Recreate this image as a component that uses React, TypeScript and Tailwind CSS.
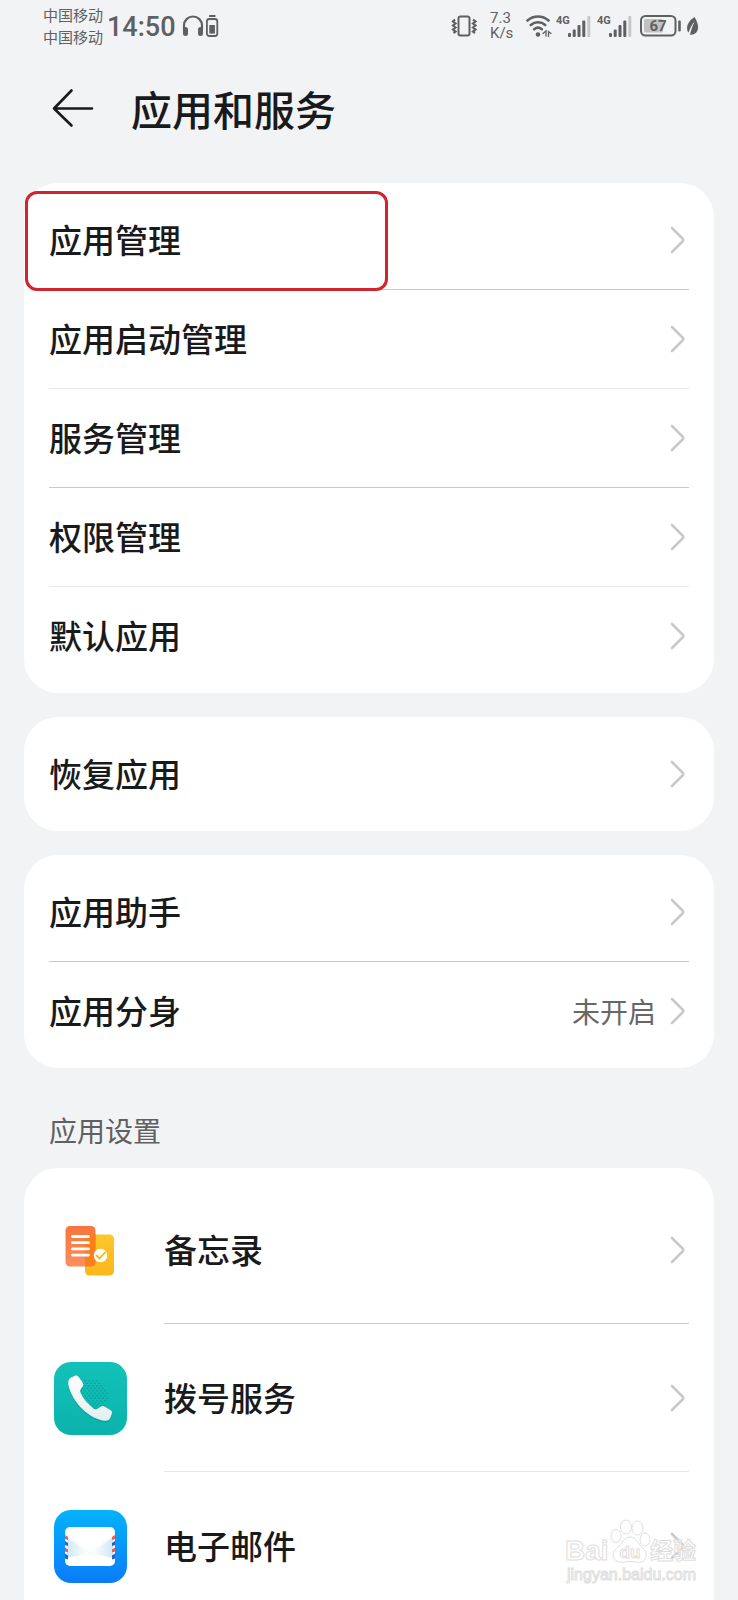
import type { ReactNode } from 'react'

interface Item {
  label: string
  value?: string
  marked?: boolean
}

interface AppItem {
  label: string
  icon: ReactNode
}

const GROUPS: Item[][] = [
  [
    { label: '应用管理', marked: true },
    { label: '应用启动管理' },
    { label: '服务管理' },
    { label: '权限管理' },
    { label: '默认应用' },
  ],
  [{ label: '恢复应用' }],
  [{ label: '应用助手' }, { label: '应用分身', value: '未开启' }],
]

const APPS: AppItem[] = [
  { label: '备忘录', icon: <MemoIcon /> },
  { label: '拨号服务', icon: <PhoneIcon /> },
  { label: '电子邮件', icon: <MailIcon /> },
]

function Chevron() {
  return (
    <svg width="16" height="28" viewBox="0 0 16 28" fill="none" className="mr-[3px] shrink-0">
      <path d="M2 2l10.500 10.500q1.500 1.500 0 3L2 26" stroke="#c9c9c9" strokeWidth="2.600" strokeLinecap="round" />
    </svg>
  )
}

function MemoIcon() {
  return (
    <svg width="73" height="73" viewBox="0 0 73 73">
      <defs>
        <linearGradient id="memoFront" x1="0" y1="0" x2="0" y2="1">
          <stop offset="0" stopColor="#f9743a" />
          <stop offset="1" stopColor="#fd8f5c" />
        </linearGradient>
        <linearGradient id="memoBack" x1="0" y1="0" x2="0" y2="1">
          <stop offset="0" stopColor="#fcc62e" />
          <stop offset="1" stopColor="#fbb71a" />
        </linearGradient>
      </defs>
      <rect x="31" y="20.500" width="29" height="41" rx="4.500" fill="url(#memoBack)" />
      <rect x="11.500" y="12" width="30" height="40.500" rx="4.500" fill="url(#memoFront)" />
      <path d="M31 52.500V25q0-4.500 4.500-4.500h6V48q0 4.500-4.500 4.500z" fill="#fa7c14" opacity="0.850" />
      <circle cx="46.500" cy="41.500" r="6.800" fill="#fff" />
      <path d="M42.500 41.500l3 3 5.500-6" fill="none" stroke="#f9b321" strokeWidth="1.800" strokeLinecap="round" />
      <path d="M18.500 22.500h16M18.500 28.700h16M18.500 34.900h16M18.500 41.100h16" stroke="#fff" strokeWidth="2.800" strokeLinecap="round" />
    </svg>
  )
}

function PhoneIcon() {
  return (
    <svg width="73" height="73" viewBox="0 0 73 73">
      <defs>
        <linearGradient id="phoneBg" x1="0" y1="0" x2="0" y2="1">
          <stop offset="0" stopColor="#12c2b9" />
          <stop offset="1" stopColor="#0bb3ac" />
        </linearGradient>
        <linearGradient id="handset" x1="0" y1="0" x2="0" y2="1">
          <stop offset="0" stopColor="#fff" />
          <stop offset="1" stopColor="#e3eeee" />
        </linearGradient>
        <pattern id="dots" width="4" height="5" patternUnits="userSpaceOnUse">
          <circle cx="1" cy="1.200" r="0.700" fill="#08918c" />
          <circle cx="3" cy="3.700" r="0.700" fill="#08918c" />
        </pattern>
      </defs>
      <rect width="73" height="73" rx="17" fill="url(#phoneBg)" />
      <circle cx="37" cy="34" r="17" fill="url(#dots)" />
      <path
        d="M17 15.500l4-1.700q2-.7 3.500 1l4.200 6q1.300 2 0 3.700l-1.900 2.600q-1.200 1.900-.2 4C29.500 37.500 34 42 39.500 46.500q2 1.300 4 .2l3.300-2.300q1.700-1 3.700 0l6.200 3.800q2 1.300 1.200 3.400l-1.600 4.200q-1.400 3.400-5.200 3C36 57.500 18 41 14.300 22.500q-.6-4.900 2.700-7z"
        fill="#067f7b"
        opacity="0.350"
        transform="translate(0 1.500)"
      />
      <path
        d="M17 15.500l4-1.700q2-.7 3.500 1l4.200 6q1.300 2 0 3.700l-1.900 2.600q-1.200 1.900-.2 4C29.500 37.500 34 42 39.500 46.500q2 1.300 4 .2l3.300-2.300q1.700-1 3.700 0l6.200 3.800q2 1.300 1.200 3.400l-1.600 4.200q-1.400 3.400-5.200 3C36 57.500 18 41 14.300 22.500q-.6-4.900 2.700-7z"
        fill="url(#handset)"
      />
    </svg>
  )
}

function MailIcon() {
  return (
    <svg width="73" height="73" viewBox="0 0 73 73">
      <defs>
        <linearGradient id="mailBg" x1="0" y1="0" x2="0" y2="1">
          <stop offset="0" stopColor="#04b3fb" />
          <stop offset="1" stopColor="#0a7cf7" />
        </linearGradient>
        <linearGradient id="foldLeft" x1="0" y1="0" x2="1" y2="0">
          <stop offset="0" stopColor="#cfe9f4" />
          <stop offset="1" stopColor="#fff" />
        </linearGradient>
        <linearGradient id="foldRight" x1="1" y1="0" x2="0" y2="0">
          <stop offset="0" stopColor="#cfe9f4" />
          <stop offset="1" stopColor="#fff" />
        </linearGradient>
      </defs>
      <rect width="73" height="73" rx="17" fill="url(#mailBg)" />
      <rect x="11" y="17" width="50" height="39" rx="5" fill="#fff" />
      <path d="M13 27l21 16.500L13 48z" fill="url(#foldLeft)" />
      <path d="M59 27L38 43.500 59 48z" fill="url(#foldRight)" />
      <path d="M14 27L33 41.500q3 2 6 0L58 27" fill="none" stroke="#eef5f9" strokeWidth="1" />
      <path d="M11 25l3 2v3l-3-1zM11 37.500l3 2v3l-3-1zM61 25l-3 2v3l3-1zM61 37.500l-3 2v3l3-1z" fill="#ee5a50" />
      <path d="M11 31l3 2v3l-3-1zM11 43.500l3 2v4l-3-1zM61 31l-3 2v3l3-1zM61 43.500l-3 2v4l3-1z" fill="#1f62d0" />
    </svg>
  )
}

function Signal() {
  return (
    <svg width="35" height="24" viewBox="0 0 35 24" fill="#5f6062">
      <text x="0" y="10" fontSize="11" fontWeight="700" fontFamily="Roboto, sans-serif">4G</text>
      <rect x="12" y="19" width="3" height="4" rx="1" />
      <rect x="16.700" y="15.500" width="3" height="7.500" rx="1" />
      <rect x="21.500" y="11" width="3" height="12" rx="1" />
      <rect x="26.300" y="6.500" width="3" height="16.500" rx="1" />
      <rect x="31.300" y="2" width="3" height="21" rx="1" fill="#c7c8ca" />
    </svg>
  )
}

function StatusBar() {
  return (
    <div className="flex h-[52px] items-center justify-between pr-[39px] pl-[43px] text-[#5f6062]">
      <div className="flex items-center">
        <div className="text-[15px] leading-[22px]">
          <div>中国移动</div>
          <div>中国移动</div>
        </div>
        <div className="ml-1 pt-0.5 font-[Roboto] text-[27px] leading-8 font-medium">14:50</div>
        <svg width="22" height="22" viewBox="0 0 22 22" className="ml-1.5" fill="none" stroke="#5f6062">
          <path d="M2 15v-4.500a9 9 0 0 1 18 0V15" strokeWidth="2.200" />
          <path d="M3.500 14.500v4M18.500 14.500v4" strokeWidth="5" strokeLinecap="round" />
        </svg>
        <svg width="14" height="24" viewBox="0 0 14 24" className="ml-px" fill="#5f6062">
          <rect x="4" y="1" width="6.500" height="2" rx="0.500" />
          <rect x="1.900" y="5" width="10.400" height="17" rx="2.500" fill="none" stroke="#5f6062" strokeWidth="1.800" />
          <rect x="4.300" y="11" width="5.600" height="8.600" />
        </svg>
      </div>
      <div className="flex items-center">
        <svg width="27" height="24" viewBox="0 0 27 24" fill="none" stroke="#5f6062" strokeWidth="2">
          <rect x="7.500" y="2.500" width="11" height="19" rx="2" />
          <path d="M4 5.500L2 7.500l2.500 2L2 11.500l2.500 2L2 15.500l2.500 2-2 1.500M22 5.500l2.500 2-2.500 2 2.500 2-2.500 2 2.500 2-2.500 2 2 1.500" strokeWidth="2.200" />
        </svg>
        <div className="ml-3 w-6 font-[Roboto] text-[15px] leading-[15px]">
          <div>7.3</div>
          <div>K/s</div>
        </div>
        <svg width="26" height="24" viewBox="0 0 26 24" className="ml-3" fill="none" stroke="#5f6062" strokeWidth="2.600" strokeLinecap="round">
          <path d="M1.500 6.500a16 16 0 0 1 21 0M4.800 11a11 11 0 0 1 14.400 0M8.200 15.200a6 6 0 0 1 7.600 0" />
          <circle cx="12" cy="20.500" r="2.300" fill="#5f6062" stroke="none" />
          <path d="M17 19.500l3-2.500v5M25 19.500l-2.500-2v5" strokeWidth="1.300" />
        </svg>
        <span className="ml-1 flex gap-1.5">
          <Signal />
          <Signal />
        </span>
        <svg width="42" height="24" viewBox="0 0 42 24" className="ml-2" fill="#5f6062">
          <rect x="1" y="2" width="34.500" height="19.500" rx="4.500" fill="none" stroke="#5f6062" strokeWidth="2" />
          <rect x="4" y="5" width="19" height="13.500" rx="1.500" fill="#c0c1c3" />
          <rect x="38.200" y="6.500" width="2.600" height="11" rx="1" />
          <text x="18" y="17" fontSize="15" fontWeight="700" textAnchor="middle" fontFamily="Roboto, sans-serif">67</text>
        </svg>
        <svg width="13" height="20" viewBox="0 0 13 20" className="ml-1" fill="#5f6062">
          <path d="M8.500 1Q1 6 1 12q0 3 1.500 4.500Q5.500 8.500 8.800 5.500 6 10 4 18.800q5 .5 7.500-4.300Q13.500 9 8.500 1z" />
        </svg>
      </div>
    </div>
  )
}

function Watermark() {
  return (
    <svg
      width="140"
      height="72"
      viewBox="0 0 140 72"
      className="pointer-events-none absolute right-9 bottom-4"
      fill="#fff"
      fillOpacity="0.600"
      stroke="#dedede"
      strokeWidth="1"
      fontFamily="'Liberation Sans', 'Noto Sans CJK SC', sans-serif"
    >
      <ellipse cx="54" cy="24" rx="5" ry="6.500" />
      <ellipse cx="64" cy="15" rx="5.500" ry="7" />
      <ellipse cx="75.500" cy="16" rx="5.500" ry="7" />
      <ellipse cx="83" cy="27.500" rx="5" ry="6.500" />
      <path d="M68 25c5 0 7 4 10 8 4 4 7 7 6 12-1 5-6 6-10 5q-6-1-12 0c-5 1-10-1-11-6 0-5 4-8 7-11 3-4 5-8 10-8z" />
      <text x="3" y="48" fontSize="28" fontWeight="700">Bai</text>
      <text x="68" y="46" fontSize="17" fontWeight="700" textAnchor="middle">du</text>
      <text x="88" y="47" fontSize="23" fontWeight="700">经验</text>
      <text x="5" y="68" fontSize="16">jingyan.baidu.com</text>
    </svg>
  )
}

export default function App() {
  return (
    <div
      lang="zh-CN"
      className="relative h-screen overflow-hidden bg-[#f2f3f5] font-['Noto_Sans_CJK_SC',sans-serif] text-[#191a1c]"
    >
      <StatusBar />

      {/* Header */}
      <header className="flex h-[131px] items-start pt-[26px] pl-[52px]">
        <button aria-label="返回" className="mt-2.5">
          <svg width="42" height="40" viewBox="0 0 42 40" fill="none" stroke="#191a1c" strokeWidth="2.600" strokeLinecap="round" strokeLinejoin="round">
            <path d="M19.500 2.500L2 20.500l17.500 17M2 20.500h38" />
          </svg>
        </button>
        <h1 className="ml-[37px] text-[41px] leading-[60px] font-medium">应用和服务</h1>
      </header>

      <main className="px-6">
        <div className="space-y-6">
          {GROUPS.map((group, g) => (
            <ul key={g} className="rounded-[34px] bg-white px-[25px] py-2">
              {group.map((item) => (
                <li key={item.label} className="relative border-b border-[#c9cacc] even:border-[#e6e7e8] last:border-b-0">
                  <a href="#" className="flex h-[98px] items-center">
                    <span className="flex-1 text-[33px] font-medium">{item.label}</span>
                    {item.value && <span className="mr-3.5 text-[28px] text-[#66676a]">{item.value}</span>}
                    <Chevron />
                  </a>
                  {item.marked && (
                    <span className="pointer-events-none absolute top-0 -left-6 z-10 h-[100px] w-[363px] rounded-xl border-3 border-[#d2232e]" />
                  )}
                </li>
              ))}
            </ul>
          ))}
        </div>

        {/* Per-app settings */}
        <h2 className="flex h-[100px] items-end px-[25px] pb-4 text-[28px] leading-[44px] text-[#5f6062]">应用设置</h2>
        <ul className="rounded-t-[34px] bg-white py-2">
          {APPS.map((app) => (
            <li key={app.label} className="group">
              <a href="#" className="flex h-[148px] items-center pr-[25px] pl-[30px]">
                {app.icon}
                <span className="ml-[37px] flex h-full flex-1 items-center border-b border-[#c9cacc] group-even:border-[#e6e7e8] group-last:border-b-0">
                  <span className="flex-1 text-[33px] font-medium">{app.label}</span>
                  <Chevron />
                </span>
              </a>
            </li>
          ))}
        </ul>
      </main>

      <Watermark />
    </div>
  )
}
